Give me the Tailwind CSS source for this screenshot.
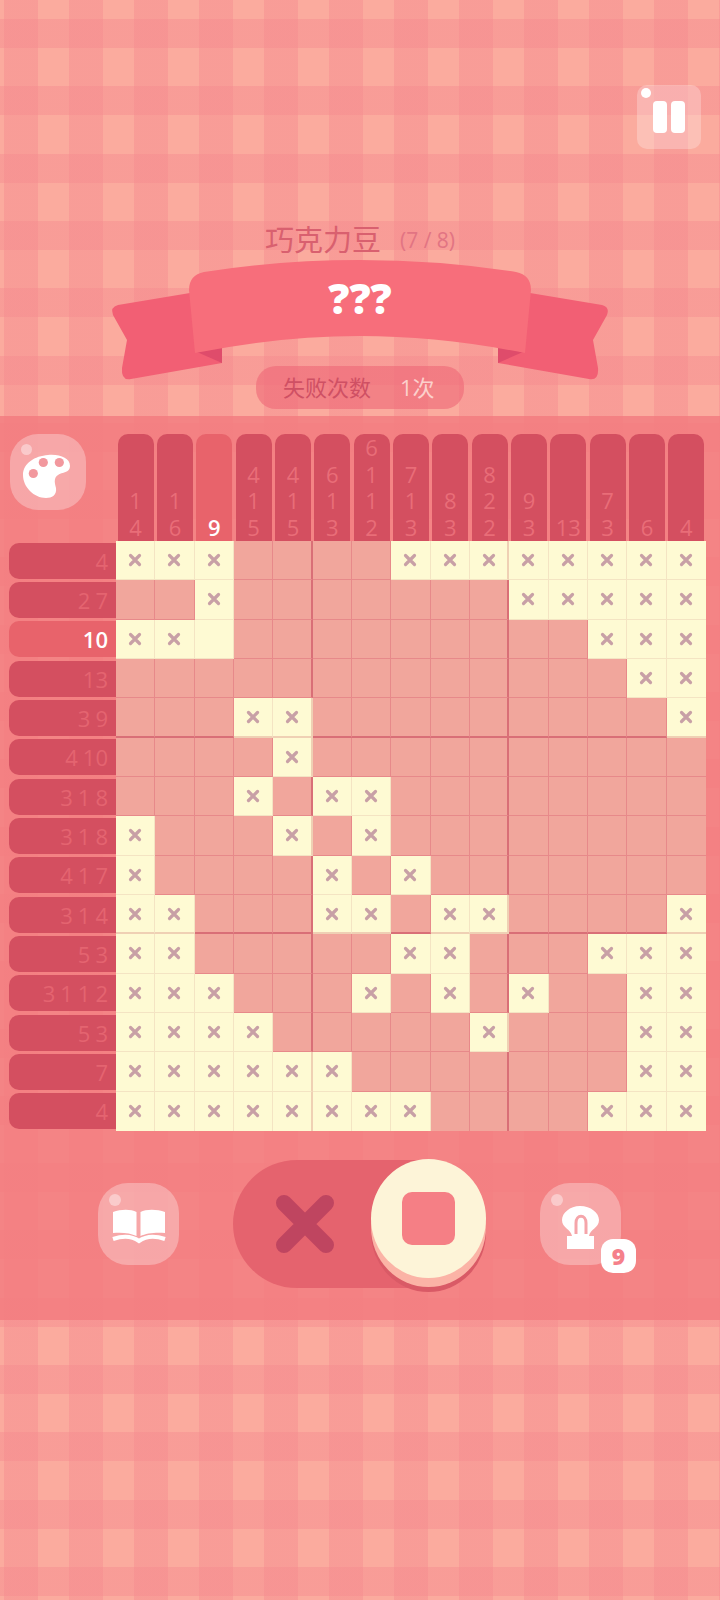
<!DOCTYPE html>
<html lang="zh">
  <head>
    <meta charset="UTF-8">
    <meta name="viewport" content="width=device-width, initial-scale=1.0">
    <title>Nonogram</title>
    <script src="https://cdn.jsdelivr.net/npm/@tailwindcss/browser@4"></script>
  </head>
  <body>
    <div class="w-[720px] h-[1600px] overflow-hidden flex flex-col font-['Open_Sans','Noto_Sans_CJK_SC',sans-serif] bg-[#fbab9e] bg-[image:repeating-linear-gradient(90deg,transparent_0px,transparent_4px,#f58b8f73_4px,#f58b8f73_38px,transparent_38px,transparent_65px),repeating-linear-gradient(180deg,transparent_0px,transparent_19px,#f58b8f73_19px,#f58b8f73_48px,transparent_48px,transparent_67.3px)]">

      <!-- header -->
      <div class="h-[416px] shrink-0 flex flex-col items-center">
        <div class="relative self-end mt-[85px] mr-[19px] w-[64px] h-[64px] rounded-[10px] bg-white/25 flex items-center justify-center gap-[4px] shrink-0">
          <span class="absolute left-[4px] top-[3px] w-[10px] h-[10px] rounded-full bg-white"></span>
          <span class="w-[14px] h-[32px] rounded-[4px] bg-white"></span>
          <span class="w-[14px] h-[32px] rounded-[4px] bg-white"></span>
        </div>
        <div class="mt-[73px] h-[36px] flex items-center gap-[19px]">
          <span class="text-[29px] leading-[36px] text-[#d9606f]">巧克力豆</span>
          <span class="text-[21px] leading-[36px] text-[#e27483]">(7 / 8)</span>
        </div>
        <div class="relative w-[520px] h-[124px] shrink-0">
          <svg class="block" width="520" height="124" viewBox="100 258 520 124">
            <path fill="#f25f74" d="M190 293L118 305Q110 307 113 315L127 340L122 368Q121 381 131 379L222 363V340Z"/>
            <path fill="#f25f74" d="M530 293L602 305Q610 307 607 315L593 340L598 368Q599 381 589 379L498 363V340Z"/>
            <path fill="#df4c6b" d="M197 352L222 347V363Z"/>
            <path fill="#df4c6b" d="M523 352L498 347V363Z"/>
            <path fill="#f76e7b" d="M189 290Q189 275 204 272Q280 260 360 260Q440 260 516 272Q531 275 531 290L525 353Q440 336 360 336Q280 336 195 353Z"/>
          </svg>
          <div class="absolute left-0 top-[19px] w-full text-center text-[42px] leading-[42px] font-extrabold text-white">???</div>
        </div>
        <div class="-mt-[16px] w-[208px] h-[43px] shrink-0 rounded-[20px] bg-[#ee6877]/60 flex items-center pl-[27px]">
          <span class="text-[22px] text-[#cf5064]">失败次数</span>
          <span class="ml-[29px] text-[22px] text-[#fcd0cc]">1次</span>
        </div>
      </div>

      <!-- board panel -->
      <div class="h-[904px] shrink-0 bg-[#f27a7e]/80">
        <div class="flex h-[125px] pt-[18px]">
          <div class="w-[116px] shrink-0 pl-[10px]">
            <div class="relative w-[76px] h-[76px] rounded-[28px] bg-white/30">
              <span class="absolute left-[11px] top-[10px] w-[11px] h-[11px] rounded-full bg-white/40"></span>
              <svg class="absolute left-0 top-0" width="76" height="76" viewBox="0 0 76 76">
                <path fill="#fff" d="M38 21C50 20 60 24 60 32C60 39 52 38 48 41C43 44 45 50 46 54C47 61 42 64 36 64C24 64 13 53 13 41C13 29 25 22 38 21Z"/>
                <circle cx="33.3" cy="28.5" r="4.6" fill="#f2989e"/>
                <circle cx="49.3" cy="28.5" r="4.6" fill="#f2989e"/>
                <circle cx="23.3" cy="39.5" r="4.6" fill="#f2989e"/>
              </svg>
            </div>
          </div>
          <div id="colClues" class="w-[590px] grid grid-cols-15"></div>
        </div>
        <div class="flex pl-[9px]">
          <div id="rowClues" class="w-[107px] h-[590px] grid grid-rows-15"></div>
          <div id="board" class="w-[590px] h-[590px] grid grid-cols-15 grid-rows-15"></div>
        </div>

        <!-- controls -->
        <div class="flex items-center mt-[29px] h-[128px] pl-[98px]">
          <div class="relative w-[81px] h-[82px] rounded-[30px] bg-white/30 shrink-0">
            <span class="absolute left-[11px] top-[11px] w-[12px] h-[12px] rounded-full bg-white/40"></span>
            <svg class="absolute left-0 top-0" width="81" height="82" viewBox="0 0 81 82">
              <path fill="#fff" d="M15 29C23 26 33 26 38.5 29V53C33 50 23 49 15 50Z"/>
              <path fill="#fff" d="M67 29C59 26 48 26 42.5 29V53C48 50 59 49 67 50Z"/>
              <path fill="none" stroke="#fff" stroke-width="4" d="M15 56C24 53 34 53 41 58C48 53 58 53 67 56"/>
            </svg>
          </div>
          <div class="relative ml-[54px] w-[196px] h-[128px] rounded-l-[64px] bg-[#e5636e] shrink-0">
            <svg class="absolute left-[43px] top-[35px]" width="58" height="58" viewBox="0 0 58 58">
              <path fill="none" stroke="#bf4560" stroke-width="16" stroke-linecap="round" d="M8 8L50 50M50 8L8 50"/>
            </svg>
            <div class="absolute left-[138px] -top-[1px] w-[115px] h-[119px] rounded-[50%] bg-[#fdf4d8] shadow-[0_9px_0_#fbb3a6,0_14px_0_#d95a66] flex items-center justify-center">
              <span class="w-[53px] h-[53px] rounded-[10px] bg-[#f57f85]"></span>
            </div>
          </div>
          <div class="relative ml-[111px] w-[81px] h-[82px] rounded-[30px] bg-white/30 shrink-0">
            <span class="absolute left-[11px] top-[11px] w-[12px] h-[12px] rounded-full bg-white/40"></span>
            <svg class="absolute left-0 top-0" width="81" height="82" viewBox="0 0 81 82">
              <path fill="#fff" d="M40 23C51 23 59 30 59 37C59 45 50 46 49 53H54V66H27V53H32C31 46 22 45 22 37C22 30 30 23 40 23Z"/>
              <path fill="none" stroke="#f5a5aa" stroke-width="3" d="M36 51V40C36 31 46 31 46 40V51"/>
            </svg>
            <div class="absolute left-[61px] top-[56px] w-[35px] h-[34px] rounded-[12px] bg-white flex items-center justify-center text-[23px] leading-none font-extrabold text-[#f5808a]">9</div>
          </div>
        </div>
      </div>
    </div>

    <script>
      const cols = [[1,4],[1,6],[9],[4,1,5],[4,1,5],[6,1,3],[6,1,1,2],[7,1,3],[8,3],[8,2,2],[9,3],[13],[7,3],[6],[4]];
      const rows = [[4],[2,7],[10],[13],[3,9],[4,10],[3,1,8],[3,1,8],[4,1,7],[3,1,4],[5,3],[3,1,1,2],[5,3],[7],[4]];
      const marks = [
        'XXX....XXXXXXXX',
        '..X.......XXXXX',
        'XXO.........XXX',
        '.............XX',
        '...XX.........X',
        '....X..........',
        '...X.XX........',
        'X...X.X........',
        'X....X.X.......',
        'XX...XX.XX....X',
        'XX.....XX...XXX',
        'XXX...X.X.X..XX',
        'XXXX.....X...XX',
        'XXXXXX.......XX',
        'XXXXXXXX....XXX'
      ];
      const cross = '<svg width="14" height="14" viewBox="0 0 14 14"><path fill="none" stroke="#c8a0a6" stroke-width="3.2" stroke-linecap="round" d="M2.5 2.5L11.5 11.5M11.5 2.5L2.5 11.5"/></svg>';

      document.getElementById('colClues').innerHTML = cols.map((c, i) => {
        const on = i === 2;
        const nums = c.map(n => `<span class="${on ? 'text-white font-semibold' : 'text-[#e96d78]'}">${n}</span>`).join('');
        return `<div class="px-[1.6px]"><div class="h-full pb-[2px] rounded-t-[10px] flex flex-col justify-end items-center text-[22px] leading-[26.5px] ${on ? 'bg-[#e8636b]' : 'bg-[#d44f60]'}">${nums}</div></div>`;
      }).join('');

      document.getElementById('rowClues').innerHTML = rows.map((r, i) => {
        const on = i === 2;
        const nums = r.map(n => `<span class="${on ? 'text-white font-semibold' : 'text-[#e46470]'}">${n}</span>`).join('');
        return `<div class="py-[1.6px]"><div class="h-full pr-2 rounded-l-[10px] flex justify-end items-center gap-[5px] text-[22px] leading-none ${on ? 'bg-[#e8636b]' : 'bg-[#d44f60]'}">${nums}</div></div>`;
      }).join('');

      document.getElementById('board').innerHTML = marks.map((row, y) => row.split('').map((m, x) => {
        const cream = m !== '.';
        const thickR = x === 4 || x === 9;
        const thickB = y === 4 || y === 9;
        let right = cream ? 'border-r border-r-[#f4e4c3]' : 'border-r border-r-[#e7898a]';
        if (thickR) right = cream ? 'border-r-2 border-r-[#efd0b4]' : 'border-r-2 border-r-[#d96f77]';
        if (x === 14) right = '';
        let bottom = cream ? 'border-b border-b-[#f4e4c3]' : 'border-b border-b-[#e7898a]';
        if (thickB) bottom = cream ? 'border-b-2 border-b-[#efd0b4]' : 'border-b-2 border-b-[#d96f77]';
        if (y === 14) bottom = '';
        return `<div class="flex items-center justify-center ${cream ? 'bg-[#fefad3]' : 'bg-[#f1a69c]'} ${right} ${bottom}">${m === 'X' ? cross : ''}</div>`;
      }).join('')).join('');
    </script>
  </body>
</html>
